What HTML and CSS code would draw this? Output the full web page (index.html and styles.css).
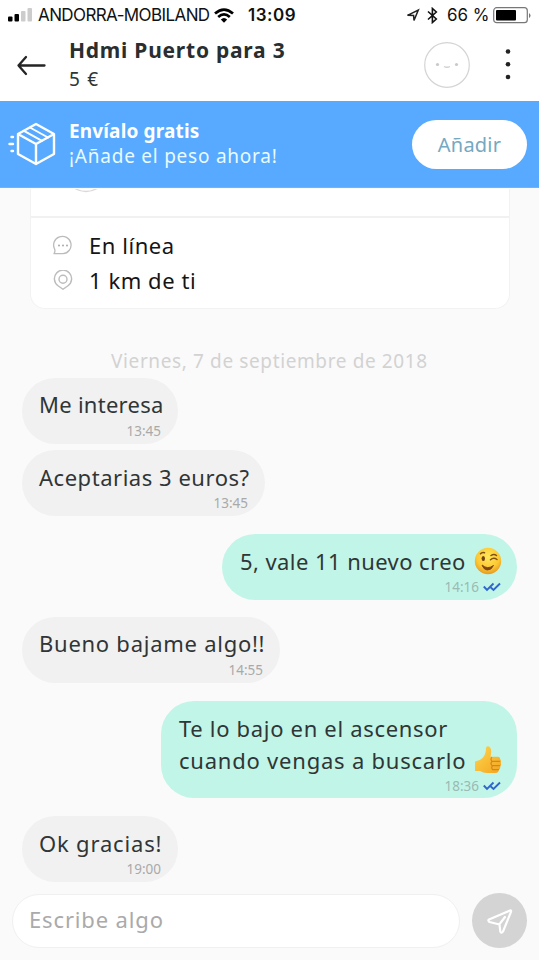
FILE: index.html
```html
<!DOCTYPE html>
<html lang="es">
<head>
<meta charset="utf-8">
<title>Chat</title>
<link rel="stylesheet" href="styles.css">
</head>
<body>
<div class="status">
  <svg class="signal" width="25" height="14" viewBox="0 0 25 14"><rect x="0" y="8.500" width="4.500" height="5" rx="1"/><rect x="6.500" y="6" width="4.500" height="7.500" rx="1"/><rect x="13" y="3" width="4.500" height="10.500" rx="1" fill="#ccc"/><rect x="19.500" y="0" width="4.500" height="13.500" rx="1" fill="#ccc"/></svg>
  <span class="carrier">ANDORRA-MOBILAND</span>
  <svg class="wifi" width="20" height="15" viewBox="0 0 20 15" fill="none" stroke="#000" stroke-width="2.700"><path d="M1 5.600Q10-2.400 19 5.600M4.200 9Q10 3.800 15.800 9"/><path d="M6.800 11.500Q10 8.500 13.200 11.500L10 14.800z" fill="#000" stroke="none"/></svg>
  <span class="clock">13:09</span>
  <svg class="loc" width="14" height="15" viewBox="0 0 14 15" fill="none" stroke="#222" stroke-width="1.500"><path d="M1.500 7.300L12.300 2L8 12.500L7.600 7.500z"/></svg>
  <svg class="bt" width="11" height="17" viewBox="0 0 11 17" fill="none" stroke="#111" stroke-width="1.600"><path d="M1 4.500L9.300 12L5.400 15.500V1.500L9.300 5L1 12.500"/></svg>
  <span class="percent">66 %</span>
  <svg class="battery" width="38" height="17" viewBox="0 0 38 17"><rect x=".7" y=".7" width="33.600" height="15" rx="3" fill="#fff" stroke="#777" stroke-width="1.200"/><rect x="3" y="3" width="20" height="10.500" rx="1"/><path d="M36 6v5q1.500-1 1.500-2.500T36 6" fill="#777"/></svg>
</div>
<header class="header">
  <svg class="back" width="30" height="21" viewBox="0 0 30 21" fill="none" stroke="#252525" stroke-width="2.300" stroke-linecap="round" stroke-linejoin="round"><path d="M28.500 10.500H2.500M10 2L2.500 10.500L10 19"/></svg>
  <div class="heading"><div class="title"><span>Hdmi Puerto para 3</span></div><div class="price">5 €</div></div>
  <svg class="avatar" width="46" height="46" viewBox="0 0 46 46"><circle cx="23" cy="23" r="22.300" fill="#fff" stroke="#d4d4d4" stroke-width="1.200"/><g fill="#c9c9c9"><circle cx="13.500" cy="22.500" r="1.600"/><circle cx="32.500" cy="22.500" r="1.600"/></g><path d="M20 24.500q3 1.600 6 0" fill="none" stroke="#d0d0d0" stroke-width="1.400"/></svg>
  <svg class="more" width="8" height="32" viewBox="0 0 8 32" fill="#222"><circle cx="4" cy="3.500" r="2.300"/><circle cx="4" cy="16.200" r="2.300"/><circle cx="4" cy="29" r="2.300"/></svg>
</header>
<section class="banner">
  <svg class="box" width="48" height="44" viewBox="0 0 48 44" fill="none" stroke="#fff" stroke-width="2.400" stroke-linejoin="round" stroke-linecap="round"><path d="M28 2L46 12V32L28 42L10 32V12zM10 12L28 22L46 12M28 22V42"/><path d="M22 5.500L40 15.500M16 8.800L34 18.800" stroke-width="2"/><path d="M3.500 15H5M1.500 22H5M3.500 29H5" stroke-width="2.400"/></svg>
  <div class="promo"><div class="promo-title"><span>Envíalo gratis</span></div><div class="promo-sub"><span>¡Añade el peso ahora!</span></div></div>
  <button class="add">Añadir</button>
</section>
<main class="chat">
  <section class="card">
    <div class="card-top"><svg width="34" height="7" viewBox="0 0 34 7" fill="none" stroke="#dcd8d8" stroke-width="1.300"><path d="M5 -1Q17 6 29 -1"/></svg></div>
    <div class="info">
      <div class="row"><svg width="20" height="20" viewBox="0 0 20 20" fill="none" stroke="#bcbcbc" stroke-width="1.300" stroke-linejoin="round"><path d="M1 18.700Q2.500 16.500 1.600 14A8.700 8.700 0 1 1 10 18.700z"/><g fill="#aaa" stroke="none"><circle cx="6" cy="10.500" r="1"/><circle cx="10" cy="10.500" r="1"/><circle cx="14" cy="10.500" r="1"/></g></svg><span class="online">En línea</span></div>
      <div class="row"><svg width="20" height="20" viewBox="0 0 20 20" fill="none" stroke="#bcbcbc" stroke-width="1.400" stroke-linejoin="round"><path d="M10 19.300Q7.500 17.500 5 15.700A8.600 8.600 0 1 1 15 15.700Q12.500 17.500 10 19.300z"/><circle cx="10" cy="9.200" r="4"/></svg><span class="distance">1 km de ti</span></div>
    </div>
  </section>
  <div class="date"><span>Viernes, 7 de septiembre de 2018</span></div>
  <div class="messages">
    <article class="bubble m1"><p><span class="t1">Me interesa</span></p><time>13:45</time></article>
    <article class="bubble m2"><p><span class="t2">Aceptarias 3 euros?</span></p><time>13:45</time></article>
    <article class="bubble sent m3"><p><span class="t3">5, vale 11 nuevo creo</span><svg class="emoji" width="28" height="28" viewBox="0 0 28 28"><defs><radialGradient id="face" cx=".5" cy=".35" r=".65"><stop offset="0" stop-color="#ffe75a"/><stop offset=".65" stop-color="#fcc933"/><stop offset="1" stop-color="#e79a22"/></radialGradient></defs><circle cx="14" cy="14" r="13.200" fill="url(#face)"/><ellipse cx="9.300" cy="11.500" rx="1.700" ry="2.500" fill="#704016"/><path d="M6.500 6.800Q8 5 10.500 5.800M17 8.500Q20 6.500 22.500 8.500M16.500 12.800Q19.500 10 23 12.500" fill="none" stroke="#805017" stroke-width="1.500" stroke-linecap="round"/><path d="M8 18Q13.500 23 19.500 18.500Q17 23.500 13 23Q9.500 22.500 8 18z" fill="#804716" stroke="#804716" stroke-linejoin="round"/></svg></p><time>14:16<svg class="ticks" width="18" height="10" viewBox="0 0 18 10" fill="none" stroke="#3167cc" stroke-width="1.900"><path d="M.8 4.500L4 8L10.500 1.500M7.800 5.500L10.500 8L17 1.500"/></svg></time></article>
    <article class="bubble m4"><p><span class="t4">Bueno bajame algo!!</span></p><time>14:55</time></article>
    <article class="bubble sent m5"><p><span class="t5">Te lo bajo en el ascensor</span></p><p><span class="t6">cuando vengas a buscarlo</span><svg class="emoji thumb" width="28" height="30" viewBox="0 0 28 30"><defs><linearGradient id="hand" x1="0" y1="0" x2="1" y2="1"><stop offset="0" stop-color="#ffd64e"/><stop offset="1" stop-color="#f3a51f"/></linearGradient></defs><path d="M1 16.500Q6 15.800 8.500 13Q12 9 12 3Q12 1 14 1.200Q17.500 2 17.200 7.500L16.500 11.800H24Q26.500 12 26.200 14.500Q27.500 15.500 26.800 18Q27.500 20 26.200 21.800Q26.500 24 24.800 25Q24.500 28 21.500 28H13Q9 28 6 26L1 26z" fill="url(#hand)"/><path d="M18 12Q16 14.500 18 16.400H26M18 16.500Q16 18.500 18 20.600H26M18.500 20.800Q17 22.500 18.500 24.600H25" fill="none" stroke="#d7861c" stroke-width="1.200"/></svg></p><time>18:36<svg class="ticks" width="18" height="10" viewBox="0 0 18 10" fill="none" stroke="#3167cc" stroke-width="1.900"><path d="M.8 4.500L4 8L10.500 1.500M7.800 5.500L10.500 8L17 1.500"/></svg></time></article>
    <article class="bubble m6"><p><span class="t7">Ok gracias!</span></p><time>19:00</time></article>
  </div>
  <footer class="composer">
    <div class="field"><span>Escribe algo</span></div>
    <div class="send"><svg width="28" height="28" viewBox="0 0 28 28" fill="none" stroke="#fff" stroke-width="2.200" stroke-linejoin="round" stroke-linecap="round"><path d="M3 12.500L24 3.500Q25.500 3 25 4.800L17 24.500Q15.500 27 14.300 24.500L13.500 17.500L3.500 15Q1.500 13.500 3 12.500zM13.500 17.200L19 10"/></svg></div>
  </footer>
</main>
</body>
</html>
```
FILE: styles.css
```css
* { box-sizing: border-box; }
body { margin: 0; width: 539px; height: 960px; overflow: hidden; background: #fafafa; font-family: "Noto Sans", sans-serif; color: #303536; }
p { margin: 0; }
svg { flex: none; display: block; }
span { white-space: nowrap; }
.status { height: 30px; background: #fff; display: flex; align-items: center; padding-left: 8px; color: #111; font: 17px/30px Inter, sans-serif; }
.signal { margin-right: 5px; }
.carrier { width: 176px; letter-spacing: -.6px; }
.wifi { margin-right: 14px; }
.clock { width: 158px; font-weight: 600; letter-spacing: .5px; }
.loc { margin-right: 7px; }
.bt { margin-right: 9px; }
.percent { width: 46px; }
.header { height: 71px; background: #fff; display: flex; align-items: flex-start; padding-left: 16px; }
.back { margin-top: 25px; }
.heading { margin-left: 23px; width: 355px; padding-top: 5px; }
.title { font-size: 21px; font-weight: 700; line-height: 30px; letter-spacing: .76px; color: #292e30; }
.price { font-size: 19px; line-height: 28px; letter-spacing: 1.2px; }
.avatar { margin-top: 12px; }
.more { margin: 18px 0 0 34px; }
.banner { height: 87px; background: #57aaff; border-bottom: 1px solid #72b3f3; display: flex; align-items: center; padding-left: 8px; color: #fff; }
.promo { width: 356px; padding-left: 13px; }
.promo-title { font-size: 19px; font-weight: 700; line-height: 25px; letter-spacing: .15px; }
.promo-sub { font-size: 19px; line-height: 25px; letter-spacing: .76px; color: #e9fbff; }
.add { width: 115px; height: 49px; border: 0; border-radius: 25px; padding: 0; background: #fff; color: #75a8c1; font: 20px/49px "Noto Sans", sans-serif; letter-spacing: .2px; }
.card { width: 480px; height: 120px; margin-left: 30px; background: #fff; border: 1px solid #f2f2f2; border-top: 0; border-radius: 0 0 15px 15px; margin-top: 1px; }
.card-top { height: 29px; border-bottom: 2px solid #f1f1f1; padding-left: 38px; }
.info { padding: 9px 0 0 22px; }
.row { height: 35px; display: flex; align-items: center; gap: 16px; color: #151515; font-size: 22px; letter-spacing: .55px; }
.date { height: 69px; padding: 38px 0 0 111px; font-size: 19px; line-height: 28px; letter-spacing: .62px; color: #d2d2d2; }
.messages { height: 504px; display: flex; flex-direction: column; align-items: flex-start; }
.bubble { flex: none; height: 66px; background: #f1f1f1; border-radius: 33px; margin: 0 0 6px 22px; padding: 11px 17px 0; font-size: 22px; }
.bubble p { height: 32px; line-height: 32px; display: flex; align-items: center; }
.bubble time { height: 20px; display: flex; justify-content: flex-end; align-items: center; gap: 4px; font-size: 13.5px; line-height: 20px; color: #a9a9a9; }
.sent { background: #c1f5e7; margin-left: 222px; padding-left: 18px; padding-right: 15px; }
.bubble.sent time { color: #9bbab4; padding-right: 1px; }
.m1, .m6 { width: 156px; }
.m2 { width: 243px; margin-bottom: 18px; }
.m3 { width: 295px; margin-bottom: 17px; }
.m4 { width: 258px; margin-bottom: 18px; }
.m5 { width: 356px; height: 97px; margin-left: 161px; margin-bottom: 18px; }
.t1 { letter-spacing: .27px; }
.t2 { letter-spacing: .53px; }
.t3 { letter-spacing: .43px; }
.t4 { letter-spacing: .74px; }
.t5 { letter-spacing: .68px; }
.t6 { letter-spacing: .78px; }
.t7 { letter-spacing: .82px; }
.m1 p, .m4 p { position: relative; top: -1px; }
.emoji { margin-left: auto; }
.composer { display: flex; align-items: center; margin: 11px 12px 0; }
.field { width: 449px; height: 54px; border: 1px solid #f0f0f0; border-radius: 27px; background: #fff; padding-left: 16px; font-size: 22px; line-height: 49px; letter-spacing: .85px; color: #aaa; }
.send { width: 55px; height: 55px; margin-left: 12px; border-radius: 50%; background: #d4d4d4; display: flex; justify-content: center; align-items: center; }
```
